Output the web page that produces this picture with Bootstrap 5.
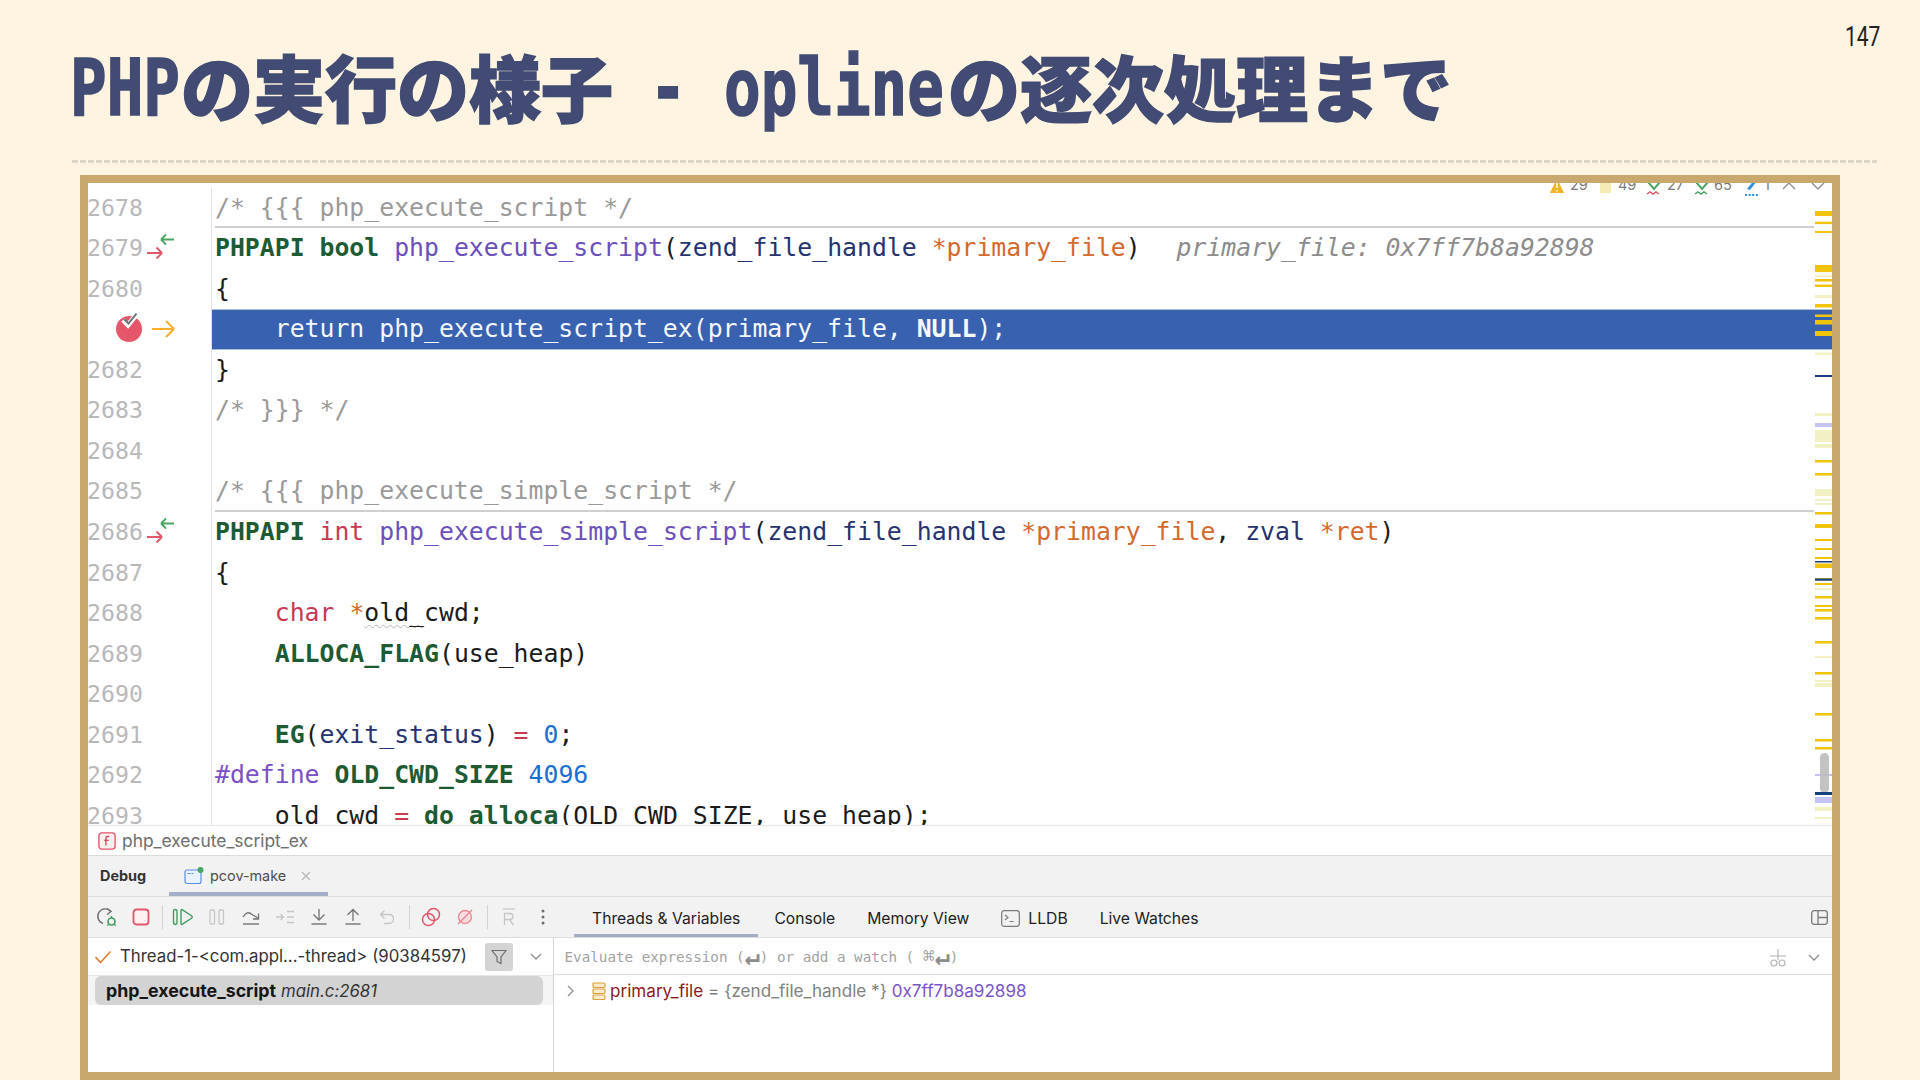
<!DOCTYPE html>
<html lang="ja">
<head>
<meta charset="utf-8">
<title>PHPの実行の様子</title>
<link href="https://cdn.jsdelivr.net/npm/bootstrap@5.3.0/dist/css/bootstrap.min.css" rel="stylesheet">
<style>
html,body{margin:0;background:#fff4e2;}
.pg{width:1920px;height:1080px;overflow:hidden;position:relative;background:#fff4e2;}
.ttl{height:160px;margin:0;padding:45px 0 0 70px;color:#414b73;font-family:"Noto Sans CJK JP",sans-serif;font-weight:900;font-size:72px;line-height:80px;white-space:nowrap;-webkit-text-stroke:1.6px #414b73;}
.lat{display:inline-block;font-family:"DejaVu Sans Mono",monospace;font-weight:700;font-size:78px;line-height:80px;transform:scaleX(.78);transform-origin:0 50%;white-space:pre;vertical-align:top;margin-top:3px;-webkit-text-stroke:1.6px #414b73;}
.lw3{width:111px}.lw6{width:224px}
.pnum{position:absolute;top:20px;left:1845px;font-family:"Roboto",sans-serif;font-size:28px;line-height:34px;color:#222;transform:scaleX(.75);transform-origin:0 50%;}
.rule{height:3px;margin:0 43px 0 72px;background:repeating-linear-gradient(90deg,#ddd6c6 0 6px,transparent 6px 8px);}
.frm{margin:12px 0 0 80px;width:1760px;height:905px;border:8px solid #c8a86c;background:#fff;overflow:hidden;}
.ed{height:642px;overflow:hidden;position:relative;padding-top:4.5px;font-family:"DejaVu Sans Mono",monospace;font-size:24.8px;color:#1b1b1b;}
.ln{height:40.57px;line-height:40.57px;}
.gt{width:125px;flex:none;border-right:1px solid #e2e2e2;color:#b9b9b9;font-size:23.2px;margin-left:-1px;overflow:hidden;}
.gt svg{flex:none}
.ga{margin-left:-6px}
.cd{flex:1 1 0;padding-left:3px;min-width:0;white-space:pre;}
.cur{background:#3861b0;color:#f4f7fc;box-shadow:inset 0 1px 0 #a9c0e2,inset 0 -1px 0 #a9c0e2;}
.fold{background:linear-gradient(#cfcfcf,#cfcfcf) 3px 100%/calc(100% - 21px) 2px no-repeat;}
.cm{color:#9a9a9a}.kw{font-weight:700;color:#1e5b34}.fn{color:#6b4fbb}.ty{color:#26336f}.pa{color:#d4692f}.rd{color:#c93a52}.nm{color:#1a6fd0}.pp{color:#7b4fc6}.ih{color:#8c8c8c;font-style:italic;margin-left:6px}
.wv{text-decoration:underline wavy #b5b5b5 1px;text-underline-offset:3px}
.sb{position:absolute;left:1727px;top:0;width:18px;height:642px;}
.insp{position:absolute;top:-9px;left:1461px;height:22px;font:14.5px/22px "Inter",sans-serif;color:#7c7c7c;white-space:nowrap;}
.insp span{position:absolute;top:0}
.insp svg{position:absolute;top:0}
.ui{font-family:"Inter","Liberation Sans",sans-serif;color:#1c1c1c;}
.crumb{height:30px;border-top:1px solid #e8e8e8;padding:1px 0 0 10px;font-size:17.4px;color:#6e6e6e;gap:6px;}
.dbg{height:41px;background:#f2f2f2;border-top:1px solid #dcdcdc;font-size:14px;position:relative;}
.dbg b{margin-left:12px;width:69px;font-weight:700;color:#333;font-size:14.4px;}
.ptab{height:40px;width:159px;padding-left:15px;gap:6px;box-shadow:inset 0 -4px 0 #a3afc7;color:#4e4e4e;font-size:14.4px;}
.tbar{height:41px;background:#f2f2f2;border-top:1px solid #dcdcdc;padding-left:2px;font-size:15.7px;}
.slot{width:34px;height:40px;flex:none;}
.sep{width:8px;flex:none;}
.sep i,.sep2 i{display:block;width:1px;height:24px;background:#d3d3d3;margin:0 auto;}
.sep2{width:10px;flex:none;}
.tabs{margin-left:14px;height:40px;}
.tb{padding:3px 16px 0;height:40px;color:#222;white-space:nowrap;}
.tb.on{padding:3px 18px 0;box-shadow:inset 0 -3px 0 #a6aec3;}
.body{height:135px;border-top:1px solid #dcdcdc;}
.lp{width:466px;flex:none;border-right:1px solid #d8d8d8;font-size:16.8px;}
.rp{flex:1 1 0;}
.thr{height:37px;padding:1px 0 0 6px;color:#333;white-space:nowrap;position:relative;}
.flt{width:28px;height:28px;border-radius:3px;background:#d4d4d4;margin-left:18px;}
.stk{height:30px;background:#f5f5f5;border-top:1px solid #e6e6e6;padding:0 10px 0 7px;}
.sel{height:29px;flex:1;background:#d3d3d3;border-radius:6px;padding:2px 0 0 11px;color:#161616;white-space:nowrap;}
.sel b{font-weight:700;font-size:17.8px;}
.sel em{margin-left:5px;color:#333;font-style:italic;}
.evl{height:37px;border-bottom:1px solid #dcdcdc;padding:3px 0 0 10.5px;font-family:"DejaVu Sans Mono",monospace;font-size:14.25px;color:#a2a2a2;white-space:pre;}
.evl b{display:inline-block;font-size:25px;line-height:14px;vertical-align:-3px;font-weight:700;color:#8c8c8c;}
.evl u{font-size:20px;line-height:14px;text-decoration:none;vertical-align:-1px;}
.vrow{padding-left:12px;height:30px;font-size:17.1px;white-space:nowrap;margin-top:1px;}
.c-v{color:#8a1c1c}.c-g{color:#808080}.c-h{color:#7a55c4}
</style>
</head>
<body>
<div class="pg">
  <h1 class="ttl"><span class="lat lw3">PHP</span>の実行の様子<span class="lat lw3"> - </span><span class="lat lw6">opline</span>の逐次処理まで</h1>
  <div class="pnum">147</div>
  <div class="rule"></div>
  <div class="frm">
    <div class="ed">
      <div class="ln d-flex"><div class="gt d-flex">2678</div><div class="cd fold"><span class="cm">/* {{{ php_execute_script */</span></div></div>
      <div class="ln d-flex"><div class="gt d-flex">2679<svg class="ga" width="56" height="40" viewBox="0 0 56 40"><path d="M24 11.5h13M24 11.5l5-5M24 11.5l5 5" fill="none" stroke="#4aa564" stroke-width="1.8"/><path d="M10 25h15M25 25l-5.500-5.500M25 25l-5.500 5.500" fill="none" stroke="#e0566a" stroke-width="1.8"/></svg></div><div class="cd"><span class="kw">PHPAPI bool</span> <span class="fn">php_execute_script</span>(<span class="ty">zend_file_handle</span> <span class="pa">*primary_file</span>)  <span class="ih">primary_file: 0x7ff7b8a92898</span></div></div>
      <div class="ln d-flex"><div class="gt d-flex">2680</div><div class="cd">{</div></div>
      <div class="ln d-flex"><div class="gt d-flex"><svg class="ms-0" width="123" height="40" viewBox="0 0 123 40"><circle cx="42" cy="20" r="13" fill="#e6566a"/><path d="M36 11l5 5 9-11" fill="none" stroke="#fff" stroke-width="5"/><path d="M37 10l4.500 4.500 8-10" fill="none" stroke="#6b7078" stroke-width="2"/><path d="M65 20h22M87 20l-8-8M87 20l-8 8" fill="none" stroke="#f5ae2d" stroke-width="2"/></svg></div><div class="cd cur">    return php_execute_script_ex(primary_file, <b>NULL</b>);</div></div>
      <div class="ln d-flex"><div class="gt d-flex">2682</div><div class="cd">}</div></div>
      <div class="ln d-flex"><div class="gt d-flex">2683</div><div class="cd"><span class="cm">/* }}} */</span></div></div>
      <div class="ln d-flex"><div class="gt d-flex">2684</div><div class="cd"></div></div>
      <div class="ln d-flex"><div class="gt d-flex">2685</div><div class="cd fold"><span class="cm">/* {{{ php_execute_simple_script */</span></div></div>
      <div class="ln d-flex"><div class="gt d-flex">2686<svg class="ga" width="56" height="40" viewBox="0 0 56 40"><path d="M24 11.5h13M24 11.5l5-5M24 11.500l5 5" fill="none" stroke="#4aa564" stroke-width="1.8"/><path d="M10 25h15M25 25l-5.500-5.500M25 25l-5.500 5.500" fill="none" stroke="#e0566a" stroke-width="1.8"/></svg></div><div class="cd"><span class="kw">PHPAPI</span> <span class="rd">int</span> <span class="fn">php_execute_simple_script</span>(<span class="ty">zend_file_handle</span> <span class="pa">*primary_file</span>, <span class="ty">zval</span> <span class="pa">*ret</span>)</div></div>
      <div class="ln d-flex"><div class="gt d-flex">2687</div><div class="cd">{</div></div>
      <div class="ln d-flex"><div class="gt d-flex">2688</div><div class="cd">    <span class="rd">char</span> <span class="pa">*</span><span class="wv">old_</span>cwd;</div></div>
      <div class="ln d-flex"><div class="gt d-flex">2689</div><div class="cd">    <span class="kw">ALLOCA_FLAG</span>(use_heap)</div></div>
      <div class="ln d-flex"><div class="gt d-flex">2690</div><div class="cd"></div></div>
      <div class="ln d-flex"><div class="gt d-flex">2691</div><div class="cd">    <span class="kw">EG</span>(<span class="ty">exit_status</span>) <span class="rd">=</span> <span class="nm">0</span>;</div></div>
      <div class="ln d-flex"><div class="gt d-flex">2692</div><div class="cd"><span class="pp">#define</span> <span class="kw">OLD_CWD_SIZE</span> <span class="nm">4096</span></div></div>
      <div class="ln d-flex"><div class="gt d-flex">2693</div><div class="cd">    old_cwd <span class="rd">=</span> <span class="kw">do_alloca</span>(OLD_CWD_SIZE, use_heap);</div></div>

      <div class="insp">
        <svg style="left:0;top:4px" width="16" height="18" viewBox="0 0 16 18"><path d="M8 0l7 15H1z" fill="#f0b429"/><path d="M8 5v5M8 12v1.500" stroke="#fff" stroke-width="1.500"/></svg><span style="left:21px">29</span>
        <svg style="left:50px;top:6px" width="14" height="16" viewBox="0 0 14 16"><path d="M1 0h11v13H1z" fill="#f5ecb5"/></svg><span style="left:69px">49</span>
        <svg style="left:97px;top:3px" width="16" height="22" viewBox="0 0 16 22"><path d="M2 5l6 7 6-7" fill="none" stroke="#4aa564" stroke-width="2"/><path d="M1 17l3-2 3 2 3-2 3 2" fill="none" stroke="#e0566a" stroke-width="1.500"/></svg><span style="left:118px">27</span>
        <svg style="left:145px;top:3px" width="16" height="22" viewBox="0 0 16 22"><path d="M2 5l6 7 6-7" fill="none" stroke="#4aa564" stroke-width="2"/><path d="M1 17l3-2 3 2 3-2 3 2" fill="none" stroke="#4aa564" stroke-width="1.500"/></svg><span style="left:165px">65</span>
        <svg style="left:195px;top:3px" width="16" height="22" viewBox="0 0 16 22"><path d="M11 2l2 2-7 9-3-1z" fill="#2f8fe0"/><path d="M1 18h14" stroke="#2f8fe0" stroke-width="2" stroke-dasharray="2 1.600"/></svg><span style="left:215px">1</span>
        <svg style="left:233px;top:7px" width="14" height="12" viewBox="0 0 14 12"><path d="M1 8l6-6 6 6" fill="none" stroke="#8c8c8c" stroke-width="1.300"/></svg>
        <svg style="left:262px;top:7px" width="14" height="12" viewBox="0 0 14 12"><path d="M1 2l6 6 6-6" fill="none" stroke="#8c8c8c" stroke-width="1.300"/></svg>
      </div>

      <svg class="sb" viewBox="0 0 18 642" width="18" height="642" aria-hidden="true">
        <g fill="#efc40a">
          <rect y="28" width="18" height="5"/><rect y="38.700" width="18" height="2.400"/><rect y="48" width="18" height="2"/><rect y="82" width="18" height="7"/><rect y="96" width="18" height="2.500"/><rect y="101.500" width="18" height="2.500"/><rect y="121" width="18" height="3.500"/><rect y="131.500" width="18" height="2.500"/><rect y="137" width="18" height="4.500"/><rect y="148" width="18" height="5"/>
          <rect y="277" width="18" height="2.500"/><rect y="290" width="18" height="2.500"/><rect y="329" width="18" height="2.500"/><rect y="341" width="18" height="4"/><rect y="356" width="18" height="2"/><rect y="365" width="18" height="2"/><rect y="374" width="18" height="2"/><rect y="380.500" width="18" height="4.500"/><rect y="395" width="18" height="2.500"/><rect y="400" width="18" height="2"/><rect y="413" width="18" height="2.500"/><rect y="422" width="18" height="2"/><rect y="426" width="18" height="2.500"/><rect y="434" width="18" height="2.500"/><rect y="458" width="18" height="2.500"/><rect y="489" width="18" height="2.500"/><rect y="530" width="18" height="2.500"/><rect y="556" width="18" height="2.500"/><rect y="564" width="18" height="2.500"/>
        </g>
        <g fill="#f1f1c4">
          <rect y="92" width="18" height="2"/><rect y="112" width="18" height="3"/><rect y="169.500" width="18" height="2.500"/><rect y="230" width="18" height="3"/><rect y="247" width="18" height="12"/><rect y="261" width="18" height="4"/><rect y="306" width="18" height="7"/><rect y="316" width="18" height="2"/><rect y="320" width="18" height="2"/><rect y="405" width="18" height="2"/><rect y="473" width="18" height="2"/><rect y="497" width="18" height="2"/><rect y="500" width="18" height="4"/><rect y="624" width="18" height="4"/><rect y="634" width="18" height="2"/>
        </g>
        <g fill="#c5c3f2">
          <rect y="240" width="18" height="4"/><rect y="591" width="18" height="2"/><rect y="614" width="18" height="6"/>
        </g>
        <rect x="5" y="570" width="9" height="40" rx="4.500" fill="#bdbdbd" opacity=".9"/>
        <g fill="#17407f">
          <rect y="192" width="18" height="2"/><rect y="378" width="18" height="1.500"/><rect y="395.500" width="18" height="2.200"/><rect y="609" width="18" height="3"/>
        </g>
      </svg>
    </div>

    <div class="ui">
      <div class="crumb d-flex align-items-center">
        <svg width="18" height="18" viewBox="0 0 16 16"><rect x=".8" y=".8" width="14.400" height="14.400" rx="2.500" fill="#fdf0f1" stroke="#e0566a" stroke-width="1.200"/><path d="M10 4H8.500Q7 4 7 5.500V12M5.500 7.500H9.500" fill="none" stroke="#d04a5c" stroke-width="1.200"/></svg>
        <span>php_execute_script_ex</span>
      </div>
      <div class="dbg d-flex align-items-center">
        <b>Debug</b>
        <div class="ptab d-flex align-items-center">
          <svg width="20" height="18" viewBox="0 0 20 18"><rect x="1" y="3" width="16" height="13.500" rx="2" fill="#eaf2fd" stroke="#5a8fe0" stroke-width="1.200"/><path d="M3.500 6.500h3M7.500 6.500h2" stroke="#5a8fe0" stroke-width="1.200"/><circle cx="16.500" cy="3" r="3" fill="#4aa564"/></svg>
          <span>pcov-make</span>
          <svg class="ms-2" width="12" height="12" viewBox="0 0 12 12"><path d="M2 2l8 8M10 2l-8 8" stroke="#b6b6b6" stroke-width="1.200"/></svg>
        </div>
      </div>
      <div class="tbar d-flex align-items-center">
        <div class="slot d-flex align-items-center justify-content-center"><svg width="22" height="22" viewBox="0 0 22 22"><path d="M15 5.500A7.500 7.500 0 1 0 7 17.500" fill="none" stroke="#6e6e6e" stroke-width="1.400"/><path d="M11 2.500l4 3-4 3" fill="none" stroke="#6e6e6e" stroke-width="1.400"/><circle cx="15.500" cy="15.500" r="3.500" fill="none" stroke="#3f9e5f" stroke-width="1.600"/><path d="M11 19.500l2-1M20 19.500l-2-1M15.500 12v-2" stroke="#3f9e5f" stroke-width="1.300"/></svg></div>
        <div class="slot d-flex align-items-center justify-content-center"><svg width="18" height="18" viewBox="0 0 18 18"><rect x="1.500" y="1.500" width="15" height="15" rx="3" fill="#fdf1f2" stroke="#e0566a" stroke-width="1.800"/></svg></div>
        <div class="sep"><i></i></div>
        <div class="slot d-flex align-items-center justify-content-center"><svg width="22" height="18" viewBox="0 0 22 18"><rect x="1.500" y="1.500" width="3.500" height="15" rx="1.700" fill="none" stroke="#3f9e5f" stroke-width="1.400"/><path d="M9 2.500Q9 1 10.500 1.900L19.500 7.700Q21 9 19.500 10.300L10.500 16.100Q9 17 9 15.500z" fill="none" stroke="#3f9e5f" stroke-width="1.400"/></svg></div>
        <div class="slot d-flex align-items-center justify-content-center"><svg width="16" height="16" viewBox="0 0 16 16"><rect x="1" y="1" width="4.500" height="14" rx="1.200" fill="none" stroke="#c6c6c6" stroke-width="1.300"/><rect x="10" y="1" width="4.500" height="14" rx="1.200" fill="none" stroke="#c6c6c6" stroke-width="1.300"/></svg></div>
        <div class="slot d-flex align-items-center justify-content-center"><svg width="18" height="18" viewBox="0 0 18 18"><path d="M1 9Q5 2 10 6.500L16 10" fill="none" stroke="#737373" stroke-width="1.300"/><path d="M11 11h5.500V5.500" fill="none" stroke="#737373" stroke-width="1.300"/><path d="M1 16h16" stroke="#737373" stroke-width="1.400"/></svg></div>
        <div class="slot d-flex align-items-center justify-content-center"><svg width="20" height="14" viewBox="0 0 20 14"><path d="M1 7h7M5.500 4l3 3-3 3" fill="none" stroke="#c6c6c6" stroke-width="1.300"/><path d="M12 1.500h7M12 7h7M12 12.500h7" stroke="#c6c6c6" stroke-width="1.300"/></svg></div>
        <div class="slot d-flex align-items-center justify-content-center"><svg width="18" height="18" viewBox="0 0 18 18"><path d="M9 1v10M3.500 6.500L9 12l5.500-5.500" fill="none" stroke="#737373" stroke-width="1.300"/><path d="M1.500 16h15" stroke="#737373" stroke-width="1.400"/></svg></div>
        <div class="slot d-flex align-items-center justify-content-center"><svg width="18" height="18" viewBox="0 0 18 18"><path d="M9 13V2M3.500 7L9 1.500 14.500 7" fill="none" stroke="#737373" stroke-width="1.300"/><path d="M1.500 16h15" stroke="#737373" stroke-width="1.400"/></svg></div>
        <div class="slot d-flex align-items-center justify-content-center"><svg width="16" height="16" viewBox="0 0 16 16"><path d="M5.500 1.500L1.500 5.500l4 4M1.500 5.500H10Q14.500 5.500 14.500 10T10 14.500H5" fill="none" stroke="#c6c6c6" stroke-width="1.300"/></svg></div>
        <div class="sep2"><i></i></div>
        <div class="slot d-flex align-items-center justify-content-center"><svg width="20" height="20" viewBox="0 0 20 20"><circle cx="7.500" cy="12.500" r="6" fill="none" stroke="#e0566a" stroke-width="1.500"/><circle cx="12.500" cy="7.500" r="6" fill="none" stroke="#e0566a" stroke-width="1.500"/></svg></div>
        <div class="slot d-flex align-items-center justify-content-center"><svg width="20" height="20" viewBox="0 0 20 20"><circle cx="10" cy="10" r="6.500" fill="#f9dde0" stroke="#e88a96" stroke-width="1.400"/><path d="M3 17L17 3" stroke="#e88a96" stroke-width="1.400"/></svg></div>
        <div class="sep2"><i></i></div>
        <div class="slot d-flex align-items-center justify-content-center"><svg width="14" height="18" viewBox="0 0 14 18"><path d="M1 1h12" stroke="#c6c6c6" stroke-width="1.200"/><path d="M2.500 17V5.500H8Q11 5.500 11 8.500T8 11.500H2.500M7.500 11.500L11.500 17" fill="none" stroke="#c6c6c6" stroke-width="1.300"/></svg></div>
        <div class="slot d-flex align-items-center justify-content-center"><svg width="4" height="18" viewBox="0 0 4 18"><circle cx="2" cy="3" r="1.500" fill="#6e6e6e"/><circle cx="2" cy="9" r="1.500" fill="#6e6e6e"/><circle cx="2" cy="15" r="1.500" fill="#6e6e6e"/></svg></div>
        <div class="tabs d-flex align-items-center">
          <div class="tb on d-flex align-items-center">Threads &amp; Variables</div>
          <div class="tb d-flex align-items-center">Console</div>
          <div class="tb d-flex align-items-center">Memory View</div>
          <div class="tb d-flex align-items-center gap-2"><svg width="19" height="17" viewBox="0 0 19 17"><rect x=".7" y=".7" width="17.600" height="15.600" rx="2.500" fill="none" stroke="#7a7a7a" stroke-width="1.200"/><path d="M4 5l3 2.500-3 2.500M8.500 11.500h4" fill="none" stroke="#7a7a7a" stroke-width="1.100"/></svg><span>LLDB</span></div>
          <div class="tb d-flex align-items-center">Live Watches</div>
        </div>
        <svg class="ms-auto me-1" width="17" height="15" viewBox="0 0 17 15"><rect x=".7" y=".7" width="15.600" height="13.600" rx="2.500" fill="none" stroke="#7a7a7a" stroke-width="1.300"/><path d="M7 1v13M7 7.500h9" stroke="#7a7a7a" stroke-width="1.300"/></svg>
      </div>
      <div class="body d-flex">
        <div class="lp">
          <div class="thr d-flex align-items-center">
            <svg class="me-2" width="18" height="14" viewBox="0 0 18 14"><path d="M1.500 7l5 5.500L16.500 1.500" fill="none" stroke="#e8833a" stroke-width="1.800"/></svg>
            <span>Thread-1-&lt;com.appl...-thread&gt; (90384597)</span>
            <span class="flt d-flex align-items-center justify-content-center"><svg width="16" height="16" viewBox="0 0 16 16"><path d="M1 1.500h14L10 8v6.500L6 12.500V8z" fill="none" stroke="#6e6e6e" stroke-width="1.200"/></svg></span>
            <svg class="ms-3" width="14" height="10" viewBox="0 0 14 10"><path d="M2 2l5 5 5-5" fill="none" stroke="#8c8c8c" stroke-width="1.300"/></svg>
          </div>
          <div class="stk d-flex align-items-center">
            <div class="sel d-flex align-items-center"><b>php_execute_script</b><em>main.c:2681</em></div>
          </div>
        </div>
        <div class="rp">
          <div class="evl d-flex align-items-center">
            <span>Evaluate expression (<b>↵</b>) or add a watch ( <u>⌘</u><b>↵</b>)</span>
            <svg class="ms-auto" style="margin-right:20px" width="18" height="20" viewBox="0 0 18 20"><path d="M9 1v11M1 8h16" stroke="#b2b2b2" stroke-width="1.100"/><circle cx="5" cy="15" r="3" fill="none" stroke="#b2b2b2" stroke-width="1.100"/><circle cx="13" cy="15" r="3" fill="none" stroke="#b2b2b2" stroke-width="1.100"/></svg>
            <svg style="margin-right:11px" width="14" height="10" viewBox="0 0 14 10"><path d="M2 2l5 5 5-5" fill="none" stroke="#8c8c8c" stroke-width="1.300"/></svg>
          </div>
          <div class="vrow d-flex align-items-center">
            <svg width="10" height="14" viewBox="0 0 10 14"><path d="M2 2l5 5-5 5" fill="none" stroke="#8c8c8c" stroke-width="1.200"/></svg>
            <svg class="ms-3 me-1" width="14" height="19" viewBox="0 0 14 19"><g fill="#fbeccd" stroke="#d9a23a" stroke-width="1.200"><rect x="1" y="1" width="12" height="4.500" rx="1"/><rect x="1" y="7" width="12" height="4.500" rx="1"/><rect x="1" y="13" width="12" height="4.500" rx="1"/></g></svg>
            <span class="c-v">primary_file</span><span class="c-g">&nbsp;= {zend_file_handle *}&nbsp;</span><span class="c-h">0x7ff7b8a92898</span>
          </div>
        </div>
      </div>
    </div>
  </div>
</div>
<script src="https://cdn.jsdelivr.net/npm/bootstrap@5.3.0/dist/js/bootstrap.bundle.min.js"></script>
</body>
</html>
